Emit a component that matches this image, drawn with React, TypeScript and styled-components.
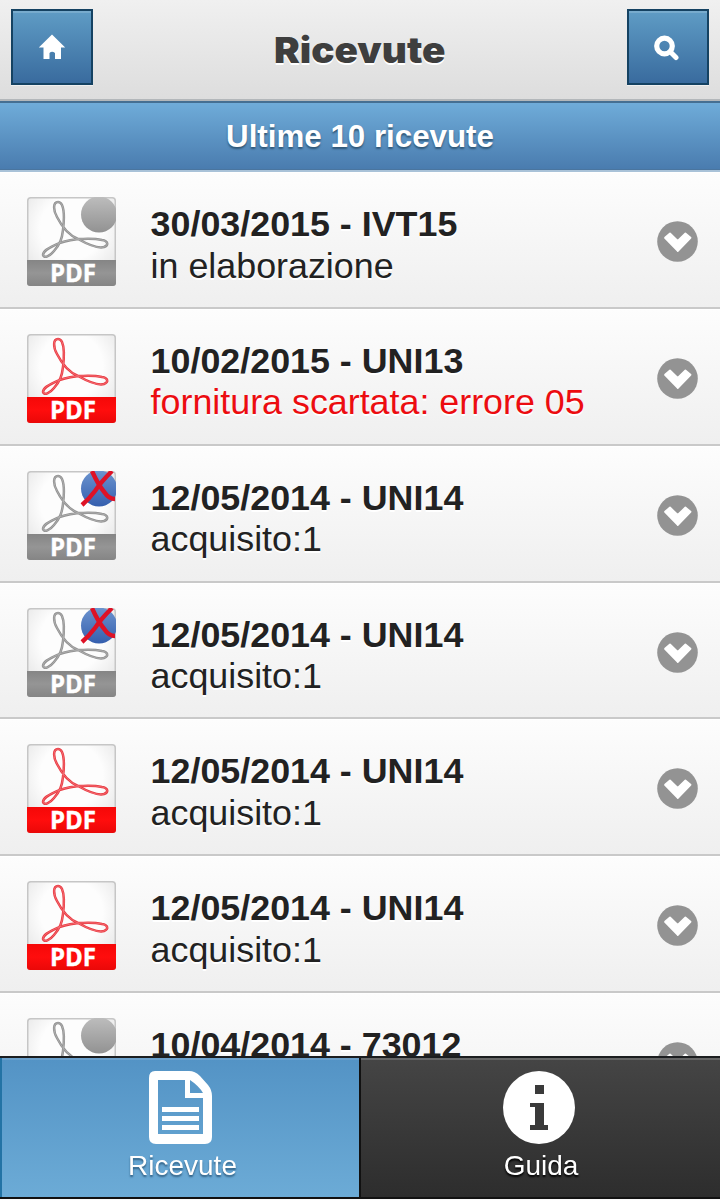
import React from "react";
import styled, { createGlobalStyle } from "styled-components";

const GlobalStyle = createGlobalStyle`
  * { box-sizing: border-box; }
  html, body { margin: 0; padding: 0; }
  body { font-family: "Liberation Sans", Arial, sans-serif; background: #f9f9f9; overflow: hidden; }
`;

const Page = styled.div`
  height: 1200px;
  width: 720px;
  overflow: hidden;
  display: flex;
  flex-direction: column;
`;

const Header = styled.header`
  flex: none;
  height: 101px;
  padding: 9px 11px 0;
  display: flex;
  justify-content: space-between;
  align-items: flex-start;
  background: linear-gradient(#f0f0f0, #dddddd);
  border-bottom: 2px solid #b3b7ba;
`;

const Title = styled.h1`
  margin: 0;
  padding-top: 21px;
  font: 900 35.5px/42px Inter, "Liberation Sans", sans-serif;
  color: #3e3e3e;
  text-shadow: 0 2px 0 #fff;
  transform: scaleX(1.09);
`;

const HeaderButton = styled.button`
  width: 82px;
  height: 76px;
  padding: 0;
  display: flex;
  align-items: center;
  justify-content: center;
  border: 2px solid #154262;
  background: linear-gradient(#5f9cc5, #396b9e);
  box-shadow: inset 0 2px 0 rgba(255, 255, 255, 0.16), 0 1px 0 rgba(255, 255, 255, 0.5);
`;

const Divider = styled.h2`
  flex: none;
  margin: 0;
  height: 71px;
  border-top: 2px solid #456f92;
  border-bottom: 2px solid #a9c2d8;
  background: linear-gradient(#6facd9, #497bae);
  box-shadow: inset 0 -1px 0 #4a759f;
  color: #fff;
  text-align: center;
  font-size: 31.3px;
  line-height: 67px;
  text-shadow: 0 2px 2px #2f5675;
`;

const List = styled.ul`
  margin: 0;
  padding: 0;
  list-style: none;
`;

const Row = styled.li`
  height: 136.85px;
  padding: 25px 22px 0 27px;
  display: flex;
  align-items: flex-start;
  background: linear-gradient(#fdfdfd, #efefef);
  border-bottom: 2px solid #c9c9c9;
  box-shadow: inset 0 1px 0 #fff;
`;

const RowText = styled.div`
  flex: 1;
  margin: 7px 0 0 34.6px;
  font-size: 35.85px;
  line-height: 41.6px;
  color: #222;
  text-shadow: 0 2px 0 #fff;
  white-space: nowrap;
`;

const RowTitle = styled.div`
  font-weight: 700;
`;

const Status = styled.div<{ $error?: boolean }>`
  color: ${(p) => (p.$error ? "#ec0c10" : "#222")};
`;

const ChevronSlot = styled.div`
  height: 89px;
  display: flex;
  align-items: center;
`;

const Footer = styled.nav`
  position: fixed;
  left: 0;
  top: 1056px;
  width: 720px;
  height: 143px;
  display: grid;
  grid-template-columns: 361px 359px;
  border-top: 2px solid #1b1d1f;
  border-bottom: 2px solid #111;
`;

const Tab = styled.a<{ $active?: boolean }>`
  display: flex;
  flex-direction: column;
  align-items: center;
  padding: 13px ${(p) => (p.$active ? "0" : "3px")} 0 0;
  color: #fff;
  font-size: 28px;
  line-height: 32px;
  background: ${(p) => (p.$active ? "linear-gradient(#5393c5, #6cabd6)" : "linear-gradient(#454545, #2d2d2d)")};
  border-left: ${(p) => (p.$active ? "2px solid #2373a5" : "0")};
  border-right: ${(p) => (p.$active ? "2px solid #111" : "0")};
  box-shadow: inset 0 2px 0 ${(p) => (p.$active ? "#6ba0cb" : "#666")};
  text-shadow: 0 2px 2px ${(p) => (p.$active ? "#315f82" : "#000")};
`;

const TabLabel = styled.span`
  margin-top: 6px;
  padding-left: 4px;
`;

type Kind = "pending" | "ready" | "failed";

const CURVE =
  "M31 5C26 5 26 13 30 20C36 32 44 39 51 42C60 47 70 52 77 50C82 48 81 44 75 43C66 41 58 42 51 42C44 43 36 44 30 47C24 50 16 53 16 58C17 62 23 59 27 54C33 47 35 42 36 33C37 25 38 15 35 8C34 6 33 5 31 5Z";

const IconSvg = styled.svg`
  flex: none;
  overflow: visible;
`;

function PdfIcon({ kind, id }: { kind: Kind; id: string }) {
  const red = kind === "ready";
  return (
    <IconSvg width="89" height="89" viewBox="0 0 89 89">
      <defs>
        <radialGradient id={`${id}-paper`} cx="50%" cy="35%" r="70%">
          <stop offset="0.5" stopColor="#fdfdfd" />
          <stop offset="1" stopColor="#e3e3e3" />
        </radialGradient>
        <linearGradient id={`${id}-band`} x1="0" y1="0" x2="0" y2="1">
          <stop offset="0" stopColor={red ? "#f50808" : "#858585"} />
          <stop offset="0.5" stopColor={red ? "#ff0d0d" : "#959595"} />
          <stop offset="1" stopColor={red ? "#ea0808" : "#858585"} />
        </linearGradient>
        <linearGradient id={`${id}-ball`} x1="0" y1="0" x2="0" y2="1">
          <stop offset="0" stopColor={kind === "failed" ? "#6c94cf" : "#bdbdbd"} />
          <stop offset="1" stopColor={kind === "failed" ? "#355fae" : "#929292"} />
        </linearGradient>
        <clipPath id={`${id}-clip`}>
          <rect width="89" height="89" rx="3" />
        </clipPath>
      </defs>
      <g clipPath={`url(#${id}-clip)`}>
        <rect width="89" height="89" fill={`url(#${id}-paper)`} />
        <rect x="0.75" y="0.75" width="87.5" height="87.5" rx="3" fill="none" stroke="#c6c6c6" strokeWidth="1.5" />
        <path d={CURVE} fill="none" stroke={red ? "#ea3a41" : "#929292"} strokeWidth="2.5" />
        <path d={CURVE} fill="none" stroke={red ? "#f58086" : "#b9b9b9"} strokeWidth="0.7" />
        <rect y="63" width="89" height="26" fill={`url(#${id}-band)`} />
        {!red && <circle cx="72" cy="17.5" r="18" fill={`url(#${id}-ball)`} />}
        {kind === "failed" && (
          <path
            d="M65 0C69 9 73 16 78 22Q82 28 88 28M85 0C77 8 72 14 68 20Q62 28 55 34"
            fill="none"
            stroke="#de1226"
            strokeWidth="4.4"
          />
        )}
      </g>
      <text
        x="23"
        y="84.5"
        textLength="46"
        lengthAdjust="spacingAndGlyphs"
        fill="#fff"
        stroke="#fff"
        strokeWidth="0.4"
        fontFamily="Open Sans, sans-serif"
        fontWeight="700"
        fontSize="24.3"
      >
        PDF
      </text>
    </IconSvg>
  );
}

const Chevron = () => (
  <svg width="41" height="41" viewBox="0 0 41 41">
    <circle cx="20.5" cy="20.5" r="20.3" fill="#939393" />
    <path d="M8 16.8L13 12.5L20.7 20L28.4 12.5L33.500 16.8L20.7 30Z" fill="#fff" stroke="#fff" strokeWidth="1.8" strokeLinejoin="round" />
  </svg>
);

const rows: { title: string; status: string; kind: Kind; error?: boolean }[] = [
  { title: "30/03/2015 - IVT15", status: "in elaborazione", kind: "pending" },
  { title: "10/02/2015 - UNI13", status: "fornitura scartata: errore 05", kind: "ready", error: true },
  { title: "12/05/2014 - UNI14", status: "acquisito:1", kind: "failed" },
  { title: "12/05/2014 - UNI14", status: "acquisito:1", kind: "failed" },
  { title: "12/05/2014 - UNI14", status: "acquisito:1", kind: "ready" },
  { title: "12/05/2014 - UNI14", status: "acquisito:1", kind: "ready" },
  { title: "10/04/2014 - 73012", status: "", kind: "pending" },
];

export default function App() {
  return (
    <Page>
      <GlobalStyle />
      <Header>
        <HeaderButton aria-label="Home">
          <svg width="28" height="26" viewBox="0 0 28 26">
            <path d="M14 0.5L27.200 13.5H23V25H17V19Q14 16.5 11.5 19V25H5.5V13.5H0.800Z" fill="#fff" />
          </svg>
        </HeaderButton>
        <Title>Ricevute</Title>
        <HeaderButton aria-label="Cerca">
          <svg width="28" height="28" viewBox="0 0 28 28">
            <circle cx="10.5" cy="13" r="7.8" fill="none" stroke="#fff" strokeWidth="5.2" />
            <path d="M17 19.5L22 24.500" stroke="#fff" strokeWidth="5" strokeLinecap="round" />
          </svg>
        </HeaderButton>
      </Header>
      <Divider>Ultime 10 ricevute</Divider>
      <List>
        {rows.map((r, i) => (
          <Row key={i}>
            <PdfIcon kind={r.kind} id={`pdf${i}`} />
            <RowText>
              <RowTitle>{r.title}</RowTitle>
              <Status $error={r.error}>{r.status}</Status>
            </RowText>
            <ChevronSlot>
              <Chevron />
            </ChevronSlot>
          </Row>
        ))}
      </List>
      <Footer>
        <Tab $active>
          <svg width="64" height="73" viewBox="0 0 64 73">
            <path
              fillRule="evenodd"
              fill="#fff"
              d="M6 0H40Q46 0 51 5L59 14Q63 19 63 25V66Q63 73 56 73H7Q0 73 0 66V7Q0 0 6 0ZM9 9V63H54V27H36V9ZM41 9V22H54Q50 15 41 9Z"
            />
            <path d="M13 38.5H50M13 47.5H50M13 56.5H50" stroke="#fff" strokeWidth="5" />
          </svg>
          <TabLabel>Ricevute</TabLabel>
        </Tab>
        <Tab>
          <svg width="72" height="73" viewBox="0 0 72 73">
            <ellipse cx="36" cy="36.5" rx="36" ry="36.5" fill="#fff" />
            <path d="M32 14H41V23H32ZM27 32H41V54H45V59H27V54H32V36H27Z" fill="#3a3a3a" />
          </svg>
          <TabLabel>Guida</TabLabel>
        </Tab>
      </Footer>
    </Page>
  );
}
